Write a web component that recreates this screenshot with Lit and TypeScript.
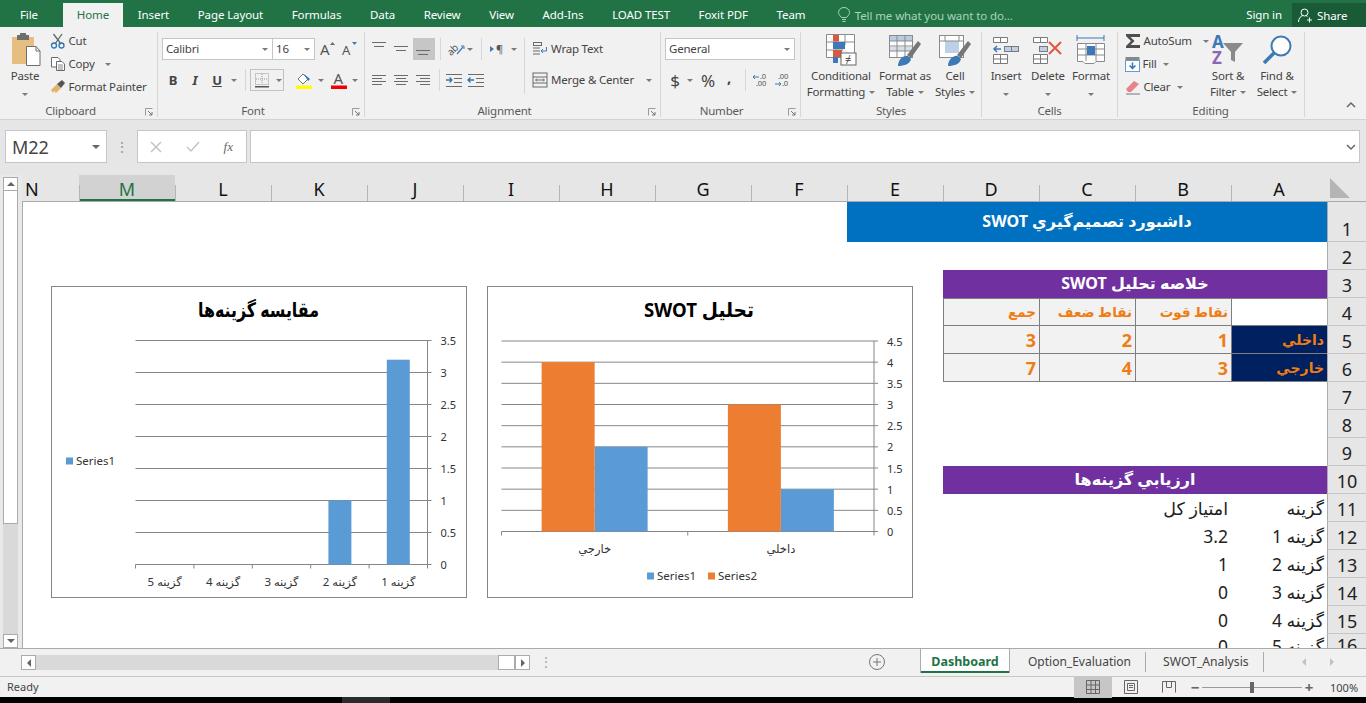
import { LitElement, html, svg, css, nothing } from "lit";
import { customElement, property } from "lit/decorators.js";

const G = "#6b6b6b";

// horizontal line glyphs used by the alignment / indent buttons
const lines = (rows: number[][], extra: unknown = nothing) => html`<svg width="18" height="16" viewBox="0 0 18 16">
  ${rows.map((r) => svg`<rect x=${r[0]} y=${r[2]} width=${r[1] - r[0]} height="1" fill=${G}></rect>`)}${extra}
</svg>`;

const caret = html`<span class="caret"></span>`;

const icPaste = html`<svg width="32" height="36" viewBox="0 0 32 36">
  <rect x="3" y="5" width="22" height="27" fill="#e6bf80"></rect>
  <rect x="8" y="3" width="12" height="5" fill="#6e6e6e"></rect><rect x="11" y="1" width="6" height="3" fill="#6e6e6e"></rect>
  <path d="M17.500 14.500H27l4 4.500V33.500H17.500Z" fill="#fff" stroke="#6e6e6e"></path><path d="M27 14.500V19h4" fill="none" stroke="#6e6e6e"></path>
</svg>`;
const icCut = html`<svg width="16" height="16" viewBox="0 0 16 16">
  <path d="M3.500 1 L11 11 M12 1 L5 11" stroke="#666" stroke-width="1.300" fill="none"></path>
  <circle cx="4" cy="12.500" r="2.500" fill="none" stroke="#2f74b5" stroke-width="1.300"></circle><circle cx="11.500" cy="12.500" r="2.500" fill="none" stroke="#2f74b5" stroke-width="1.300"></circle>
</svg>`;
const icCopy = html`<svg width="16" height="16" viewBox="0 0 16 16" fill="#fff" stroke="#6a6a6a">
  <path d="M1.500 1.500H8l2 2V11H1.500Z"></path><path d="M6.500 5.500H12l2.500 2.500V14.500H6.500Z"></path><path d="M8 9h5M8 11h5M8 13h5" stroke-width=".8"></path>
</svg>`;
const icPainter = html`<svg width="16" height="16" viewBox="0 0 16 16">
  <path d="M1 11 L7 5 L11 9 L6 14 L4 12 L3 14Z" fill="#e2b36a"></path><path d="M7 5 L12 1 L15 4 L11 9Z" fill="#555"></path>
</svg>`;
const icGrow = (up: boolean) => html`<svg width="20" height="16" viewBox="0 0 20 16">
  <text x="4" y="14" class="svgt" font-size=${up ? 15 : 13}>A</text>
  <path d=${up ? "M14 4 l2.500-3 2.500 3Z" : "M14 1 l2.500 3 2.500-3Z"} fill=${up ? G : "#3d79b5"}></path>
</svg>`;
const icBorders = html`<svg width="16" height="16" viewBox="0 0 16 16">
  <rect x="1.500" y="1.500" width="13" height="11" fill="none" stroke="#999" stroke-dasharray="1 1"></rect>
  <path d="M8 2v10M2 7h12" stroke="#999" stroke-dasharray="1 1"></path><rect x="1" y="14" width="14" height="1.500" fill="#555"></rect>
</svg>`;
const icFill = html`<svg width="18" height="18" viewBox="0 0 18 18">
  <path d="M3 8 L8 3 L13 8 L8 13Z" fill="#fff" stroke="#777"></path><path d="M9 3 L15 8 L13 10Z" fill="#2f74b5"></path>
  <rect x="1" y="14.500" width="16" height="3.500" fill="#ffff00"></rect>
</svg>`;
const icColor = html`<svg width="18" height="18" viewBox="0 0 18 18">
  <text x="3.500" y="13" class="svgt" font-size="15">A</text><rect x="1" y="14.500" width="16" height="3.500" fill="#f00000"></rect>
</svg>`;
const icOrient = html`<svg width="18" height="16" viewBox="0 0 18 16">
  <text x="0" y="12" class="svgt" font-size="10" transform="rotate(-45 6 9)">ab</text><path d="M10 13 L16 6" stroke="#3d79b5" stroke-width="1.200"></path><path d="M14 5h3v3" fill="none" stroke="#3d79b5"></path>
</svg>`;
const icRtl = html`<svg width="16" height="14" viewBox="0 0 16 14"><path d="M1 4l4 3-4 3Z" fill="#3d79b5"></path><text x="7" y="11" class="svgt" font-size="11">¶</text></svg>`;
const icWrap = html`<svg width="16" height="16" viewBox="0 0 16 16" fill="none" stroke="#6a6a6a">
  <rect x="1.500" y="1.500" width="8" height="3"></rect><path d="M1 7h7M1 10h7M1 13h7"></path><path d="M14.500 6v4h-5M11 8l-2 2 2 2" stroke="#3d79b5"></path>
</svg>`;
const icMerge = html`<svg width="16" height="16" viewBox="0 0 16 16" fill="none" stroke="#6a6a6a">
  <rect x="1" y="1" width="14" height="14"></rect><path d="M1 5h14M1 11h14M4 8h8" ></path><path d="M5 6.500 3.500 8 5 9.500M11 6.500 12.500 8 11 9.500" stroke="#3d79b5"></path>
</svg>`;
const icDec = (dir: string) => html`<svg width="18" height="14" viewBox="0 0 18 14">
  ${dir === "l"
    ? svg`<path d="M1 4h6M3 2 1 4l2 2" stroke="#3d79b5" fill="none"></path><text x="8" y="6" class="svgs">.0</text><text x="4" y="13" class="svgs">.00</text>`
    : svg`<text x="4" y="6" class="svgs">.00</text><path d="M1 11h6M5 9l2 2-2 2" stroke="#3d79b5" fill="none"></path><text x="8" y="13" class="svgs">.0</text>`}
</svg>`;
const icCond = html`<svg width="32" height="34" viewBox="0 0 32 34">
  <path d="M1.500 1.500H29.500V24M1.500 1.500V24.500H18M11 1.500V24M20 1.500V12M1.500 9H29M1.500 17H18" fill="#fff" stroke="#8a8a8a"></path>
  <rect x="8" y="2" width="6" height="6.500" fill="#d9593d"></rect><rect x="8" y="9" width="12" height="7" fill="#3f77bb"></rect><rect x="8" y="17" width="9" height="7" fill="#d9593d"></rect><rect x="8" y="24" width="5" height="6" fill="#3f77bb"></rect>
  <rect x="16" y="20" width="15" height="12" fill="#fff" stroke="#666"></rect><text x="20" y="30" class="svgt" font-size="11">≠</text>
</svg>`;
const icTable = html`<svg width="34" height="34" viewBox="0 0 34 34">
  <rect x="1.500" y="2.500" width="23" height="22" fill="#fff" stroke="#8a8a8a"></rect><rect x="2" y="3" width="22" height="5" fill="#b9cbe0"></rect>
  <rect x="2" y="14" width="22" height="4" fill="#d5dfeb"></rect><path d="M9 3v21M17 3v21M2 8h22M2 13h22M2 18h22" stroke="#8a8a8a"></path>
  <path d="M19 22 L30 8 L33 11 L23 25Z" fill="#777"></path><path d="M10 33 C10 26 16 22 20 23 L23 26 C22 31 16 33 10 33Z" fill="#3d79b5"></path>
</svg>`;
const icStyles = html`<svg width="34" height="34" viewBox="0 0 34 34">
  <rect x="1.500" y="2.500" width="24" height="22" fill="#fff" stroke="#8a8a8a"></rect><rect x="7" y="8" width="14" height="12" fill="#bdd0e6"></rect>
  <path d="M7 3v5M21 3v5M2 8h24" stroke="#8a8a8a" fill="none"></path>
  <path d="M19 22 L30 8 L33 11 L23 25Z" fill="#777"></path><path d="M10 33 C10 26 16 22 20 23 L23 26 C22 31 16 33 10 33Z" fill="#3d79b5"></path>
</svg>`;
const icInsert = html`<svg width="28" height="28" viewBox="0 0 28 28" fill="#fff" stroke="#7a7a7a">
  <path d="M1.500 1.500h14v5h-14ZM8.500 1.500v5"></path><rect x="12.500" y="10.500" width="14" height="5" fill="#bdd0e6"></rect><path d="M19.500 10.500v5M1.500 18.500h14v9h-14ZM8.500 18.500v9M1.500 23h14"></path>
  <path d="M9 13H2M5 10l-3 3 3 3" stroke="#3d79b5" stroke-width="1.500" fill="none"></path>
</svg>`;
const icDelete = html`<svg width="32" height="28" viewBox="0 0 32 28" fill="#fff" stroke="#7a7a7a">
  <path d="M1.500 1.500h14v5h-14ZM8.500 1.500v5M1.500 18.500h14v9h-14ZM8.500 18.500v9M1.500 23h14"></path><rect x="7.500" y="10.500" width="8" height="5" fill="#bdd0e6"></rect>
  <path d="M17 6 L29 18 M29 6 L17 18" stroke="#e0583a" stroke-width="2"></path>
</svg>`;
const icFormat = html`<svg width="30" height="32" viewBox="0 0 30 32">
  <path d="M1 4h27M1 1v6M28 1v6" stroke="#3d79b5" fill="none"></path>
  <path d="M1.500 9.500H28.500V27.500H20l-2 2H9l-2-2H1.500Z" fill="#fff" stroke="#8a8a8a"></path><path d="M10 10v17M20 10v17M2 15h26M2 21h26" stroke="#8a8a8a"></path><rect x="11" y="12" width="8" height="9" fill="#3f77bb"></rect>
</svg>`;
const icFillDown = html`<svg width="15" height="16" viewBox="0 0 15 16"><rect x=".5" y="1" width="14" height="4" fill="#888"></rect><rect x=".5" y="4.500" width="14" height="11" fill="#fff" stroke="#6a9ac9"></rect><path d="M7.500 6.500v6M4.500 9.500l3 3 3-3" stroke="#2f74b5" stroke-width="1.500" fill="none"></path></svg>`;
const icSigma = html`<svg width="16" height="16" viewBox="0 0 16 16"><path d="M1 1H15V4H5.500L9.500 8 5.500 12H15V15H1V13L6 8 1 3Z" fill="#4e4e4e"></path></svg>`;
const icEraser = html`<svg width="16" height="16" viewBox="0 0 16 16"><path d="M1 10 L9 2 L14 5 L6 13 L3 13Z" fill="#e6838b"></path><path d="M1 15h14" stroke="#777"></path></svg>`;
const icSort = html`<svg width="32" height="32" viewBox="0 0 32 32">
  <text x="0" y="14" class="svgb" fill="#3d79b5">A</text><text x="0" y="30" class="svgb" fill="#8e63b8">Z</text>
  <path d="M11 9H31L23 18V28L19 26V18Z" fill="#8a8a8a"></path>
</svg>`;
const icFind = html`<svg width="32" height="32" viewBox="0 0 32 32"><circle cx="20" cy="12" r="9.500" fill="#fff" stroke="#3d79b5" stroke-width="2"></circle><path d="M13 19 L3 29" stroke="#3d79b5" stroke-width="3.500"></path></svg>`;

interface Series { name: string; color: string; values: number[] }
interface ChartCfg {
  w: number; h: number; title: string; titleX: number; titleLen: number; max: number;
  l: number; r: number; t: number; b: number; barW: number;
  cats: string[]; series: Series[]; legend: { x: number; y: number }[];
}

@customElement("bar-chart")
export class BarChart extends LitElement {
  @property({ attribute: false }) cfg!: ChartCfg;

  render() {
    const c = this.cfg;
    const y = (v: number) => c.b - (v / c.max) * (c.b - c.t);
    const ticks: number[] = [];
    for (let v = 0; v <= c.max; v += 0.5) ticks.push(v);
    const catW = (c.r - c.l) / c.cats.length;
    return html`<svg width=${c.w} height=${c.h} viewBox="0 0 ${c.w} ${c.h}">
      <text class="title" x=${c.titleX} y="23" direction="rtl" text-anchor="middle" textLength=${c.titleLen} lengthAdjust="spacingAndGlyphs">${c.title}</text>
      ${ticks.map((v) => svg`
        <line x1=${c.l} x2=${c.r + 4} y1=${y(v)} y2=${y(v)} class="ln"></line>
        <text class="lab" x=${c.r + 13} y=${y(v)}>${v}</text>`)}
      <line x1=${c.r} x2=${c.r} y1=${c.t} y2=${c.b + 4} class="ln"></line>
      ${c.cats.map((name, i) => {
        const cx = c.r - catW * (i + 0.5);
        return svg`
          <line x1=${c.r - catW * (i + 1)} x2=${c.r - catW * (i + 1)} y1=${c.b} y2=${c.b + 4} class="ln"></line>
          <text class="cat" x=${cx} y=${c.b + 17} direction="rtl" text-anchor="middle">${name}</text>
          ${c.series.map((s, j) => svg`<rect fill=${s.color} x=${cx + (c.series.length / 2 - j - 1) * c.barW} y=${y(s.values[i])} width=${c.barW} height=${c.b - y(s.values[i])}></rect>`)}`;
      })}
      ${c.series.map((s, j) => svg`
        <rect fill=${s.color} x=${c.legend[j].x} y=${c.legend[j].y - 3} width="7" height="7"></rect>
        <text class="leg" x=${c.legend[j].x + 10} y=${c.legend[j].y}>${s.name}</text>`)}
    </svg>`;
  }

  static styles = css`
    :host { display: block; background: #fff; border: 1px solid #868686; box-sizing: border-box; }
    svg { display: block; margin: -1px; }
    .ln { stroke: #868686; stroke-width: 1; }
    .title { font: bold 20px "Noto Sans", "DejaVu Sans", sans-serif; fill: #000; dominant-baseline: central; }
    .lab { font: 11px "Noto Sans", sans-serif; fill: #333; dominant-baseline: central; }
    .leg { font: 11.500px "Noto Sans", sans-serif; fill: #333; dominant-baseline: central; }
    .cat { font: 11.500px "Noto Sans", "DejaVu Sans", sans-serif; fill: #333; dominant-baseline: central; }
  `;
}

const optionsChart: ChartCfg = {
  w: 416, h: 312, title: "مقايسه گزينه‌ها", titleX: 207.5, titleLen: 121, max: 3.5,
  l: 84.5, r: 376.5, t: 54.5, b: 278.5, barW: 23,
  cats: ["گزينه 1", "گزينه 2", "گزينه 3", "گزينه 4", "گزينه 5"],
  series: [{ name: "Series1", color: "#5b9bd5", values: [3.2, 1, 0, 0, 0] }],
  legend: [{ x: 15, y: 174.500 }],
};
const swotChart: ChartCfg = {
  w: 426, h: 312, title: "تحليل SWOT", titleX: 212, titleLen: 110, max: 4.5,
  l: 14.5, r: 387, t: 55, b: 245.5, barW: 53,
  cats: ["داخلي", "خارجي"],
  series: [
    { name: "Series1", color: "#5b9bd5", values: [1, 2] },
    { name: "Series2", color: "#ed7d31", values: [3, 4] },
  ],
  legend: [{ x: 160, y: 289.500 }, { x: 221, y: 289.500 }],
};

const COLS = ["A", "B", "C", "D", "E", "F", "G", "H", "I", "J", "K", "L", "M", "N"];
const options: [string, string][] = [
  ["گزينه 1", "3.2"], ["گزينه 2", "1"], ["گزينه 3", "0"], ["گزينه 4", "0"], ["گزينه 5", "0"],
];

@customElement("app-root")
export class AppRoot extends LitElement {
  private _big(icon: unknown, a: string, b: string | null, cls: string, arrowInline = false) {
    return html`<div class="big ${cls}">
      <div class="bigic">${icon}</div>
      <div class="bl">${a}</div>
      <div class="bl">${b ?? nothing}${b && arrowInline ? html`<span class="caret in"></span>` : nothing}${!b ? caret : nothing}</div>
    </div>`;
  }

  private _ribbon() {
    const launcher = html`<svg class="launch" width="8" height="8" viewBox="0 0 8 8"><path d="M.5 7.500V.5H7.500" fill="none" stroke="#9a9a9a"></path><path d="M3 3l4 4M7 4v3H4" fill="none" stroke="#777"></path></svg>`;
    return html`<div class="ribbon">
      <section class="g g-clip">
        <div class="gc flex">
          <div class="big w50">
            <div class="bigic">${icPaste}</div><div class="bl">Paste</div><div class="bl">${caret}</div>
          </div>
          <div class="rows3">
            <div class="r3">${icCut}<span>Cut</span></div>
            <div class="r3">${icCopy}<span>Copy</span><span class="caret sp"></span></div>
            <div class="r3">${icPainter}<span>Format Painter</span></div>
          </div>
        </div>
        <div class="lb">Clipboard${launcher}</div>
      </section>

      <section class="g g-font">
        <div class="gc two">
          <div class="row">
            <div class="combo w110"><span>Calibri</span>${caret}</div>
            <div class="combo w43"><span>16</span>${caret}</div>
            <div class="i w22">${icGrow(true)}</div><div class="i w22">${icGrow(false)}</div>
          </div>
          <div class="row">
            <div class="i w22 tb">B</div><div class="i w22 ti">I</div><div class="i w22 tu">U</div><div class="i w12">${caret}</div>
            <div class="i w10"><span class="vs"></span></div>
            <div class="splitbtn"><div class="i w22">${icBorders}</div><div class="i w12">${caret}</div></div>
            <div class="i w9"></div>
            <div class="i w22">${icFill}</div><div class="i w11">${caret}</div>
            <div class="i w26">${icColor}</div><div class="i w6">${caret}</div>
          </div>
        </div>
        <div class="lb">Font${launcher}</div>
      </section>

      <section class="g g-align">
        <div class="gc flex">
          <div class="two w155">
            <div class="row">
              <div class="i w22">${lines([[1, 15, 1], [3, 13, 5]])}</div>
              <div class="i w22">${lines([[1, 15, 5], [3, 13, 9]])}</div>
              <div class="i w22 on">${lines([[1, 15, 9], [3, 13, 13]])}</div>
              <div class="i w10"><span class="vs"></span></div>
              <div class="i w22">${icOrient}</div><div class="i w6">${caret}</div>
              <div class="i w16"><span class="vs"></span></div>
              <div class="i w16">${icRtl}</div><div class="i w18">${caret}</div>
            </div>
            <div class="row">
              <div class="i w22">${lines([[1, 15, 3], [1, 11, 6], [1, 15, 9], [1, 11, 12]])}</div>
              <div class="i w22">${lines([[1, 15, 3], [3, 13, 6], [1, 15, 9], [3, 13, 12]])}</div>
              <div class="i w22">${lines([[1, 15, 3], [5, 15, 6], [1, 15, 9], [5, 15, 12]])}</div>
              <div class="i w8"><span class="vs"></span></div>
              <div class="i w22">${lines([[1, 17, 2], [9, 17, 6], [9, 17, 10], [1, 17, 14]], svg`<path d="M1 8h6M4.500 5.500 7 8l-2.500 2.500" stroke="#2f74b5" stroke-width="1.300" fill="none"></path>`)}</div>
              <div class="i w22">${lines([[1, 17, 2], [9, 17, 6], [9, 17, 10], [1, 17, 14]], svg`<path d="M7 8H1M3.500 5.500 1 8l2.500 2.500" stroke="#2f74b5" stroke-width="1.300" fill="none"></path>`)}</div>
            </div>
          </div>
          <span class="vtall"></span>
          <div class="two wrapcol">
            <div class="row r-txt">${icWrap}<span>Wrap Text</span></div>
            <div class="row r-txt">${icMerge}<span>Merge &amp; Center</span><span class="caret mg"></span></div>
          </div>
        </div>
        <div class="lb">Alignment${launcher}</div>
      </section>

      <section class="g g-num">
        <div class="gc two">
          <div class="row"><div class="combo w130"><span>General</span>${caret}</div></div>
          <div class="row">
            <div class="i w20 cur">$</div><div class="i w10">${caret}</div>
            <div class="i w26 pct">%</div><div class="i w16 tb comma">,</div>
            <div class="i w16"><span class="vs"></span></div>
            <div class="i w16">${icDec("l")}</div><div class="i w28">${icDec("r")}</div>
          </div>
        </div>
        <div class="lb">Number${launcher}</div>
      </section>

      <section class="g g-styles">
        <div class="gc flex">
          ${this._big(icCond, "Conditional", "Formatting", "w80", true)}
          ${this._big(icTable, "Format as", "Table", "w48", true)}
          ${this._big(icStyles, "Cell", "Styles", "w52", true)}
        </div>
        <div class="lb">Styles</div>
      </section>

      <section class="g g-cells">
        <div class="gc flex">
          ${this._big(icInsert, "Insert", null, "w48")}
          ${this._big(icDelete, "Delete", null, "w36")}
          ${this._big(icFormat, "Format", null, "w50")}
        </div>
        <div class="lb">Cells</div>
      </section>

      <section class="g g-edit">
        <div class="gc flex">
          <div class="rows3 w77">
            <div class="r3">${icSigma}<span>AutoSum</span><span class="caret far"></span></div>
            <div class="r3">${icFillDown}<span>Fill</span><span class="caret in"></span></div>
            <div class="r3">${icEraser}<span>Clear</span><span class="caret in"></span></div>
          </div>
          ${this._big(icSort, "Sort &", "Filter", "w52", true)}
          ${this._big(icFind, "Find &", "Select", "w46", true)}
        </div>
        <div class="lb">Editing</div>
      </section>
      <div class="collapse">
        <svg width="10" height="6" viewBox="0 0 10 6"><path d="M1 5l4-4 4 4" fill="none" stroke="#666" stroke-width="1.500"></path></svg>
      </div>
    </div>`;
  }

  private _cells() {
    const rh = (n: number) => html`<div class="rh">${n}</div>`;
    return html`
      ${rh(1)}<div class="c banner s5">داشبورد تصميم‌گيري SWOT</div><div class="s9"></div>
      ${rh(2)}<div class="s14"></div>
      ${rh(3)}<div class="c head s4">خلاصه تحليل SWOT</div><div class="s10"></div>
      ${rh(4)}<div class="c bd top"></div>
      <div class="c bd top kpi">نقاط قوت</div><div class="c bd top kpi">نقاط ضعف</div><div class="c bd top kpi">جمع</div><div class="s10"></div>
      ${rh(5)}<div class="c bd navy">داخلي</div>
      <div class="c bd kpi num">1</div><div class="c bd kpi num">2</div><div class="c bd kpi num">3</div><div class="s10"></div>
      ${rh(6)}<div class="c bd navy">خارجي</div>
      <div class="c bd kpi num">3</div><div class="c bd kpi num">4</div><div class="c bd kpi num">7</div><div class="s10"></div>
      ${[7, 8, 9].map((n) => html`${rh(n)}<div class="s14"></div>`)}
      ${rh(10)}<div class="c head s4">ارزيابي گزينه‌ها</div><div class="s10"></div>
      ${rh(11)}<div class="c txt">گزينه</div><div class="c txt">امتياز كل</div><div class="s12"></div>
      ${options.map((o, i) => html`${rh(12 + i)}<div class="c txt">${o[0]}</div><div class="c txt">${o[1]}</div><div class="s12"></div>`)}
    `;
  }

  render() {
    const tabs = ["Insert", "Page Layout", "Formulas", "Data", "Review", "View", "Add-Ins", "LOAD TEST", "Foxit PDF", "Team"];
    return html`
      <header class="tabbar">
        <div class="file">File</div>
        <div class="home">Home</div>
        ${tabs.map((t) => html`<div class="tab">${t}</div>`)}
        <div class="tell">
          <svg width="12" height="16" viewBox="0 0 12 16" fill="none" stroke="#a9d3ba"><path d="M3.500 10.500C1 8 .5 6.500 .5 5.500a5.500 5 0 0 1 11 0c0 1-.5 2.500-3 5ZM4 12.500h4M4.500 14.500h3"></path></svg>
          <span>Tell me what you want to do...</span>
        </div>
        <div class="signin">Sign in</div>
        <div class="share">
          <svg width="15" height="15" viewBox="0 0 15 15" fill="none" stroke="#fff"><circle cx="6.500" cy="4.500" r="3.500"></circle><path d="M.5 14c0-4 2.500-6 4.500-6.500M8 7.500l1.500 1M9 12h5M11.500 9.500v5"></path></svg>
          <span>Share</span>
        </div>
      </header>
      ${this._ribbon()}
      <div class="fbar">
        <div class="namebox"><span>M22</span><span class="caret dk"></span></div>
        <div class="dots">⋮</div>
        <div class="fxbox">
          <svg width="12" height="12" viewBox="0 0 12 12"><path d="M1 1l10 10M11 1 1 11" stroke="#c4c4c4" stroke-width="1.500"></path></svg>
          <svg width="14" height="12" viewBox="0 0 14 12"><path d="M1 6l4 4 8-9" fill="none" stroke="#c4c4c4" stroke-width="1.500"></path></svg>
          <i>fx</i>
        </div>
        <div class="finput"><svg width="10" height="6" viewBox="0 0 10 6"><path d="M1 1l4 4 4-4" fill="none" stroke="#666" stroke-width="1.500"></path></svg></div>
      </div>
      <div class="sheet">
        <div class="vbar">
          <div class="sbtn"><span class="up"></span></div>
          <div class="vthumb"></div>
          <div class="vtrack"></div>
          <div class="sbtn"><span class="caret dk"></span></div>
        </div>
        <div class="pane">
          <div class="colhead">
            <div class="corner"><svg width="24" height="24" viewBox="0 0 24 24"><path d="M3 3V23H23Z" fill="#b5b5b5"></path></svg></div>
            ${COLS.map((c) => html`<div class="ch ${c === "M" ? "sel" : ""} ${c === "N" ? "n" : ""}">${c}</div>`)}
          </div>
          <div class="body">
            <div class="grid">${this._cells()}</div>
            <bar-chart class="chart-a" .cfg=${optionsChart}></bar-chart>
            <bar-chart class="chart-b" .cfg=${swotChart}></bar-chart>
          </div>
        </div>
      </div>
      <div class="tabs">
        <div class="hbar">
          <div class="hb"><span class="tl"></span></div>
          <div class="htrack"></div>
          <div class="hthumb"></div>
          <div class="hb"><span class="tr"></span></div>
        </div>
        <div class="hdots">⋮</div>
        <svg class="plus" width="18" height="18" viewBox="0 0 18 18" fill="none" stroke="#777"><circle cx="9" cy="9" r="7.500"></circle><path d="M9 5v8M5 9h8"></path></svg>
        <div class="st active">Dashboard</div>
        <div class="st">Option_Evaluation</div>
        <div class="st last">SWOT_Analysis</div>
        <div class="stnav"><span class="tl pale"></span><span class="tr pale"></span></div>
      </div>
      <footer class="status">
        <div class="ready">Ready</div>
        <div class="vw on">
          <svg width="14" height="14" viewBox="0 0 14 14" fill="none" stroke="#666"><path d="M.5.5h13v13H.5ZM.5 5h13M.5 9.500h13M5 .5v13M9.500 .5v13"></path></svg>
        </div>
        <div class="vw">
          <svg width="14" height="14" viewBox="0 0 14 14" fill="none" stroke="#666"><path d="M.5.5h13v13H.5ZM3.500 3.500h7v7h-7ZM5 5.500h4M5 7.500h4"></path></svg>
        </div>
        <div class="vw">
          <svg width="14" height="12" viewBox="0 0 14 12" fill="none" stroke="#666"><path d="M.5 11.500V.5h13v11M4.500 .5v6h5v-6"></path></svg>
        </div>
        <div class="zm">−</div>
        <div class="slider"><span class="knob"></span></div>
        <div class="zm">+</div>
        <div class="pctz">100%</div>
      </footer>
      <div class="strip"><span></span></div>
    `;
  }

  static styles = css`
    :host {
      display: block; width: 1366px; height: 703px; overflow: hidden; background: #f1f1f1;
      font: 12px "Noto Sans", sans-serif; color: #444;
    }
    svg { flex: none; overflow: visible; }
    .svgt { font-family: "Noto Sans", sans-serif; fill: #555; }
    .svgs { font: 7.500px "Noto Sans", sans-serif; fill: #555; }
    .svgb { font: bold 17px "Noto Sans", sans-serif; }

    .tabbar { height: 27px; background: #217346; display: flex; align-items: flex-end; color: #fff; font-size: 11.500px; letter-spacing: -0.1px; }
    .file { width: 63px; height: 24px; line-height: 23px; text-align: center; padding-right: 5px; box-sizing: border-box; }
    .home { width: 60px; height: 24px; line-height: 23px; text-align: center; background: #f1f1f1; color: #217346; margin-right: 0.5px; }
    .tab { padding: 0 14.3px; height: 24px; line-height: 23px; white-space: nowrap; }
    .tell { display: flex; align-items: center; gap: 5px; height: 24px; margin-left: 18px; color: #a9d3ba; white-space: nowrap; }
    .signin { margin-left: auto; height: 24px; line-height: 23px; }
    .share { display: flex; align-items: center; gap: 4px; width: 74px; height: 24px; margin-left: 10px; padding: 0 0 0 6px; box-sizing: border-box; background: #195a37; }

    .ribbon { height: 93px; box-sizing: border-box; border-bottom: 1px solid #d2d2d2; display: flex; padding-top: 5px; background: #f1f1f1; font-size: 11.500px; letter-spacing: -0.2px; }
    .g { height: 85px; box-sizing: border-box; border-right: 1px solid #d6d6d6; display: flex; flex-direction: column; flex: none; position: relative; }
    .g-clip { width: 158px; }
    .g-font { width: 207px; padding-left: 4px; }
    .g-align { width: 296px; padding-left: 4px; }
    .g-num { width: 140px; padding-left: 4px; }
    .g-styles { width: 181px; }
    .g-cells { width: 136px; }
    .g-edit { width: 187px; padding-left: 7px; }
    .g-clip .lb { padding-right: 16px; }
    .g-font .lb, .g-align .lb { padding-right: 20px; }
    .g-num .lb { padding-right: 22px; }
    .g-edit .lb { padding-right: 8px; }
    .gc { height: 72px; }
    .flex { display: flex; }
    .two { display: flex; flex-direction: column; gap: 9px; padding-top: 6px; box-sizing: border-box; }
    .row { display: flex; height: 22px; align-items: center; }
    .lb { height: 13px; line-height: 13px; text-align: center; color: #5a5a5a; position: relative; }
    .launch { position: absolute; right: 4px; top: 4px; }
    .caret { display: inline-block; width: 0; height: 0; border: 3px solid transparent; border-top: 3.500px solid #7a7a7a; border-bottom: 0; flex: none; }
    .caret.dk { border-top-color: #666; border-left-width: 4px; border-right-width: 4px; border-top-width: 4px; }
    .caret.in { margin-left: 4px; vertical-align: middle; }
    .caret.sp { margin-left: 8px; }
    .caret.mg { margin-left: 9px; }
    .caret.far { margin-left: 9px; }

    .big { display: flex; flex-direction: column; align-items: center; flex: none; }
    .bigic { height: 36px; display: flex; align-items: center; justify-content: center; }
    .bl { height: 16px; line-height: 16px; white-space: nowrap; }
    .w50 { width: 50px; } .w80 { width: 80px; } .w48 { width: 48px; } .w52 { width: 52px; } .w36 { width: 36px; } .w46 { width: 46px; }
    .w77 { width: 77px; flex: none; } .w155 { width: 155px; flex: none; }
    .rows3 { display: flex; flex-direction: column; gap: 5px; }
    .r3 { height: 18px; display: flex; align-items: center; gap: 2.500px; white-space: nowrap; }
    .r3 span:not(.caret), .r-txt span:not(.caret) { padding-bottom: 2px; }
    .combo { display: flex; justify-content: space-between; align-items: center; height: 22px; box-sizing: border-box; background: #fff; border: 1px solid #c6c6c6; padding: 0 4px 0 3px; margin-right: -1px; flex: none; }
    .combo span:not(.caret) { padding-bottom: 1px; }
    .w110 { width: 111px; } .w43 { width: 43px; margin-right: 0; } .w130 { width: 130px; }
    .i { display: flex; align-items: center; justify-content: center; height: 22px; flex: none; }
    .w6 { width: 6px; } .w8 { width: 8px; } .w9 { width: 9px; } .w10 { width: 10px; } .w11 { width: 11px; } .w12 { width: 12px; } .w16 { width: 16px; }
    .w18 { width: 18px; } .w20 { width: 20px; } .w22 { width: 22px; } .w26 { width: 26px; } .w28 { width: 28px; }
    .on { background: #c6c6c6; }
    .vs { width: 1px; height: 22px; background: #d6d6d6; }
    .vtall { width: 1px; height: 56px; margin: 6px 0 0 0; background: #d6d6d6; }
    .wrapcol { margin-left: 7px; }
    .r-txt { gap: 3px; white-space: nowrap; }
    .tb { font-weight: 700; font-size: 13px; }
    .ti { font-style: italic; font-weight: 700; font-size: 13px; }
    .tu { font-weight: 700; font-size: 13px; text-decoration: underline; }
    .comma { font-size: 15px; padding-bottom: 6px; box-sizing: border-box; }
    .cur { font-size: 17px; } .pct { font-size: 17px; }
    .splitbtn { display: flex; border: 1px solid #c2c2c2; height: 22px; box-sizing: border-box; width: 34px; flex: none; align-items: center; }
    .splitbtn .i { height: 20px; }
    .collapse { flex: 1; display: flex; justify-content: flex-end; align-items: flex-end; padding: 0 10px 9px 0; height: 85px; box-sizing: border-box; }

    .fbar { height: 55px; background: #e6e6e6; display: flex; padding-top: 10px; box-sizing: border-box; }
    .namebox, .fxbox, .finput { height: 33px; box-sizing: border-box; background: #fff; border: 1px solid #c6c6c6; display: flex; align-items: center; }
    .namebox { width: 102px; margin-left: 5px; padding: 0 6px 0 6px; justify-content: space-between; font-size: 18px; color: #444; }
    .dots { width: 30px; text-align: center; line-height: 33px; color: #999; font-size: 14px; }
    .fxbox { width: 110px; justify-content: space-between; padding: 0 13px 0 12px; }
    .fxbox i { font: italic 13px "Liberation Serif", serif; color: #666; }
    .finput { width: 1110px; margin-left: 3px; justify-content: flex-end; padding-right: 3px; }

    .sheet { height: 473px; display: flex; background: #e6e6e6; }
    .vbar { width: 22px; flex: none; padding-left: 3px; padding-top: 2px; box-sizing: border-box; display: flex; flex-direction: column; background: #e9e9e9; }
    .sbtn { width: 15px; height: 14px; flex: none; background: #fff; border: 1px solid #ababab; box-sizing: border-box; display: flex; align-items: center; justify-content: center; }
    .up { width: 0; height: 0; border: 4px solid transparent; border-bottom: 4px solid #666; border-top: 0; }
    .vthumb { width: 15px; height: 333px; flex: none; background: #fff; border: 1px solid #ababab; box-sizing: border-box; border-top: 0; }
    .vtrack { width: 15px; flex: 1; background: #d9d9d9; }
    .pane { width: 1344px; flex: none; display: flex; flex-direction: column; }
    .colhead { height: 27px; flex: none; display: flex; direction: rtl; background: #e6e6e6; border-bottom: 1px solid #ababab; box-sizing: border-box; }
    .corner { width: 39px; flex: none; box-sizing: border-box; direction: ltr; }
    .ch { width: 96px; flex: none; display: flex; align-items: center; justify-content: center; font-size: 18px; color: #111; position: relative; padding-top: 1px; box-sizing: border-box; }
    .ch::after { content: ""; position: absolute; left: 0; bottom: 0; width: 1px; height: 16px; background: #b5b5b5; }
    .ch.sel { background: #d2d2d2; color: #217346; box-shadow: inset 0 -2px 0 #217346; }
    .ch.n { width: 57px; justify-content: flex-end; padding-left: 3px; }
    .ch.n::after { display: none; }
    .body { height: 446px; position: relative; overflow: hidden; background: #fff; box-shadow: inset 1px 0 0 #ababab; }
    .grid {
      direction: rtl; display: grid; grid-template-columns: 39px repeat(13, 96px) 57px;
      grid-template-rows: 40px repeat(14, 28px); font-size: 18px; color: #222;
    }
    .rh { background: #e6e6e6; border-left: 1px solid #ababab; border-bottom: 1px solid #c6c6c6; box-sizing: border-box; display: flex; align-items: flex-end; justify-content: center; color: #222; line-height: 23px; }
    .s4 { grid-column: span 4; } .s5 { grid-column: span 5; } .s9 { grid-column: span 9; } .s10 { grid-column: span 10; } .s12 { grid-column: span 12; } .s14 { grid-column: span 14; }
    .c { box-sizing: border-box; font-family: "Noto Sans", "DejaVu Sans", sans-serif; display: flex; align-items: center; white-space: nowrap; padding: 0 3px; overflow: hidden; }
    .banner { background: #0070c0; color: #fff; font-weight: 700; font-size: 16px; justify-content: center; padding-bottom: 2px; }
    .head { background: #7030a0; color: #fff; font-weight: 700; font-size: 16px; justify-content: center; padding-bottom: 2px; }
    .bd { border-left: 1px solid #7f7f7f; border-bottom: 1px solid #7f7f7f; }
    .top { border-top: 1px solid #7f7f7f; }
    .kpi { background: #f2f2f2; color: #ef7d14; font-weight: 700; font-size: 13.500px; }
    .num { font-size: 18px; }
    .navy { background: #002060; color: #ef7d14; font-weight: 700; font-size: 14px; }
    .txt { font-size: 17.500px; color: #222; }
    .chart-a { position: absolute; left: 29px; top: 84px; width: 416px; height: 312px; }
    .chart-b { position: absolute; left: 465px; top: 84px; width: 426px; height: 312px; }

    .tabs { height: 28px; box-sizing: border-box; border-top: 1px solid #ababab; display: flex; background: #f1f1f1; }
    .hbar { display: flex; width: 509px; height: 15px; margin: 6px 0 0 21px; flex: none; }
    .hb { width: 15px; height: 15px; box-sizing: border-box; background: #fff; border: 1px solid #ababab; display: flex; align-items: center; justify-content: center; flex: none; }
    .htrack { flex: 1; background: #d9d9d9; }
    .hthumb { width: 17px; background: #fff; border: 1px solid #ababab; box-sizing: border-box; flex: none; }
    .tl, .tr { width: 0; height: 0; border: 4px solid transparent; display: inline-block; }
    .tl { border-right: 4px solid #666; border-left: 0; }
    .tr { border-left: 4px solid #666; border-right: 0; }
    .hdots { width: 32px; text-align: center; color: #aaa; line-height: 26px; font-size: 14px; flex: none; }
    .plus { margin: 4px 0 0 306px; flex: none; }
    .st { padding: 0 14px 0 18px; height: 20px; line-height: 20px; margin-top: 3px; color: #444; border-right: 1px solid #ababab; white-space: nowrap; flex: none; }
    .st.active { width: 90px; height: 24px; line-height: 25px; margin: 0 0 0 34px; padding: 0; text-align: center; box-sizing: border-box; background: #fff; color: #217346; font-weight: 700; font-size: 12.500px; border-left: 1px solid #ababab; border-right: 1px solid #ababab; box-shadow: inset 0 -2px 0 #217346; }
    .st.last { padding-left: 17px; font-size: 12.200px; }
    .stnav { display: flex; gap: 24px; margin: 9px 0 0 38px; height: 8px; }
    .pale { opacity: .35; }

    .status { height: 21px; box-sizing: border-box; display: flex; align-items: center; background: #f1f1f1; border-top: 1px solid #c8c8c8; font-size: 11px; }
    .ready { margin: -2px auto 0 7px; }
    .vw { width: 38px; height: 21px; display: flex; align-items: center; justify-content: center; }
    .zm { width: 14px; text-align: center; font-size: 15px; font-weight: 700; color: #666; }
    .slider { width: 100px; height: 1px; background: #999; display: flex; justify-content: center; align-items: center; }
    .knob { width: 4px; height: 11px; background: #666; display: block; flex: none; }
    .pctz { width: 50px; padding-left: 14px; box-sizing: border-box; }
    .strip { height: 6px; background: #000; }
    .strip span { display: block; width: 48px; height: 6px; margin-left: 342px; background: #2b2b2b; }
  `;
}

declare global {
  interface HTMLElementTagNameMap {
    "app-root": AppRoot;
    "bar-chart": BarChart;
  }
}
